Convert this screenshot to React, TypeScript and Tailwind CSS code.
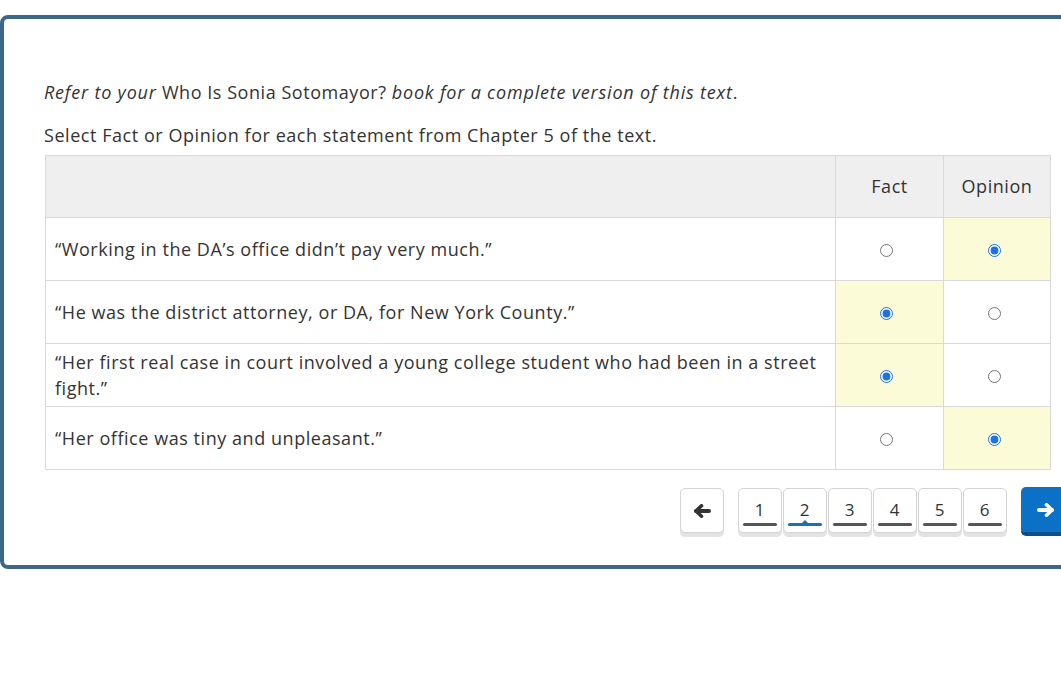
import React, { useState } from 'react';

const rows = [
  { text: '“Working in the DA’s office didn’t pay very much.”', answer: 'opinion' },
  { text: '“He was the district attorney, or DA, for New York County.”', answer: 'fact' },
  { text: '“Her first real case in court involved a young college student who had been in a street fight.”', answer: 'fact' },
  { text: '“Her office was tiny and unpleasant.”', answer: 'opinion' },
];

function Arrow({ dir, className }: { dir: 'left' | 'right'; className?: string }) {
  return (
    <svg viewBox="0 0 18 14" className={className} fill="none" stroke="currentColor" strokeLinecap="round" strokeLinejoin="round">
      <g transform={dir === 'right' ? 'translate(18 0) scale(-1 1)' : undefined}>
        <path d="M3 7h13" strokeWidth="4" />
        <path d="M8.5 1.8L3 7l5.5 5.2" strokeWidth="3.6" />
      </g>
    </svg>
  );
}

export default function App() {
  const [answers, setAnswers] = useState<string[]>(rows.map((r) => r.answer));
  const [page, setPage] = useState(2);

  return (
    <div className="w-[1061px] h-[677px] overflow-hidden bg-white text-[#333] pt-[15px] tracking-[0.55px]" style={{ fontFamily: '"Open Sans", sans-serif' }}>
      <div className="w-[1090px] border-4 border-[#3d6789] rounded-lg pl-10 pr-0 pt-[60px] pb-[29px]">
        <p className="text-[18px] leading-[26px]">
          <i className="tracking-[0.8px]">Refer to your</i> Who Is Sonia Sotomayor? <i className="tracking-[0.8px]">book for a complete version of this text</i>.
        </p>
        <p className="text-[18px] leading-[26px] mt-[17px]">Select Fact or Opinion for each statement from Chapter 5 of the text.</p>

        <table className="mt-[7px] ml-px w-[1006px] border-collapse text-[18px]">
          <thead>
            <tr className="bg-[#efefef] h-[62px]">
              <th className="border border-[#d9d9d9] w-[790px]"></th>
              <th className="border border-[#d9d9d9] w-[108px] font-normal">Fact</th>
              <th className="border border-[#d9d9d9] font-normal">Opinion</th>
            </tr>
          </thead>
          <tbody>
            {rows.map((r, i) => (
              <tr key={i} className="h-[63px]">
                <td className="border border-[#d9d9d9] px-[9px] py-[5px] leading-[26px] align-middle">
                  <div>{r.text}</div>
                </td>
                {['fact', 'opinion'].map((opt) => (
                  <td
                    key={opt}
                    className={`border border-[#d9d9d9] text-center align-middle ${answers[i] === opt ? 'bg-[#fbfbd7]' : ''}`}
                  >
                    <input
                      type="radio"
                      name={`row-${i}`}
                      checked={answers[i] === opt}
                      onChange={() => setAnswers((a) => a.map((v, j) => (j === i ? opt : v)))}
                      className="w-[13px] h-[13px] mr-[6px] accent-[#1a73e8] align-middle"
                    />
                  </td>
                ))}
              </tr>
            ))}
          </tbody>
        </table>

        <div className="flex items-start mt-[18px] ml-[636px]">
          <button className="w-[44px] h-[45px] bg-white border border-[#d3d3d3] rounded-[5px] shadow-[0_4px_0_#e3e3e3] flex items-center justify-center text-[#333]">
            <Arrow dir="left" className="w-[18px] h-[14px]" />
          </button>
          <div className="flex gap-px ml-[14px]">
            {[1, 2, 3, 4, 5, 6].map((n) => (
              <button
                key={n}
                onClick={() => setPage(n)}
                className="relative w-[44px] h-[45px] bg-white border border-[#d3d3d3] rounded-[5px] shadow-[0_4px_0_#e3e3e3] flex flex-col items-center pt-[11px] text-[17px] leading-[20px] font-medium text-[#333]"
              >
                <span>{n}</span>
                <span className={`absolute left-[4px] right-[4px] bottom-[6px] h-[3px] rounded-sm ${page === n ? 'bg-[#1a6fb5]' : 'bg-[#555]'}`} />
                {page === n && (
                  <span className="absolute left-1/2 -translate-x-1/2 bottom-[8px] w-0 h-0 border-l-[4px] border-r-[4px] border-b-[4px] border-l-transparent border-r-transparent border-b-[#1a6fb5]" />
                )}
              </button>
            ))}
          </div>
          <button className="ml-[14px] w-[50px] h-[49px] -mt-px bg-[#0b71c6] rounded-[5px] border-b-4 border-[#0a4f88] flex items-center justify-center text-white">
            <Arrow dir="right" className="w-[18px] h-[14px]" />
          </button>
        </div>
      </div>
    </div>
  );
}
